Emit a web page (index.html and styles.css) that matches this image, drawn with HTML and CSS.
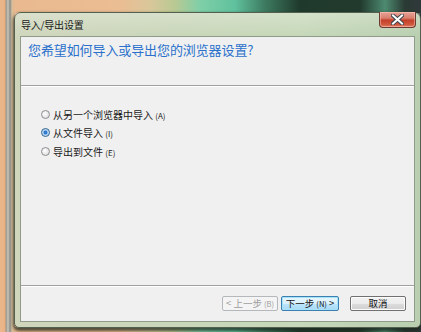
FILE: index.html
```html
<!DOCTYPE html>
<html lang="zh-CN">
<head>
<meta charset="utf-8">
<title>导入/导出设置</title>
<link rel="stylesheet" href="styles.css">
</head>
<body>
<div class="desktop">
  <div class="strip-left"></div>
  <div class="window">
    <div class="titlebar">
      <span class="title">导入/导出设置</span>
      <button class="close" aria-label="关闭">
        <svg width="13" height="11" viewBox="0 0 13 11">
          <path d="M2 1.5 L11 9.5 M11 1.5 L2 9.5" stroke="#3d4650" stroke-width="4" stroke-linecap="square"/>
          <path d="M2 1.5 L11 9.5 M11 1.5 L2 9.5" stroke="#ffffff" stroke-width="2" stroke-linecap="square"/>
        </svg>
      </button>
    </div>
    <div class="client">
      <div class="header">
        <h1 class="question">您希望如何导入或导出您的浏览器设置?</h1>
      </div>
      <div class="body">
        <label class="option"><span class="radio"></span><span class="label">从另一个浏览器中导入 <span class="key">(A)</span></span></label>
        <label class="option"><span class="radio checked"></span><span class="label">从文件导入 <span class="key">(I)</span></span></label>
        <label class="option"><span class="radio"></span><span class="label">导出到文件 <span class="key">(E)</span></span></label>
      </div>
      <div class="footer">
        <button class="btn disabled">&lt; 上一步 <span class="key">(B)</span></button>
        <button class="btn default">下一步 <span class="key">(N)</span> &gt;</button>
        <button class="btn cancel">取消</button>
      </div>
    </div>
  </div>
</div>
</body>
</html>
```

FILE: styles.css
```css
html, body {
  margin: 0;
  padding: 0;
  width: 421px;
  height: 332px;
  overflow: hidden;
}

.desktop {
  position: relative;
  width: 421px;
  height: 332px;
  overflow: hidden;
  display: flex;
  align-items: flex-start;
  background:
    linear-gradient(to right,
      #e9b88e 0px, #ebbd93 120px, #d9c79a 150px, #b9c993 175px,
      #7fcfa8 200px, #5fc19d 235px, #3d7a60 265px, #1f3a2c 300px,
      #223a2e 360px, #4d8a70 385px, #2a3a34 405px, #30383a 421px);
  font-family: "Noto Sans CJK SC", "Noto Sans", sans-serif;
}

.strip-left {
  position: absolute;
  left: 0;
  top: 0;
  width: 14px;
  height: 332px;
  background: linear-gradient(to right, #eab78c 0px, #e8b184 5px, #9a9488 6px, #c9c7bd 8px, #8a8b85 10px, #d8c1a0 12px, #e2b68e 14px);
}

.window {
  position: relative;
  margin: 12px 0 0 14px;
  width: 408px;
  height: 316px;
  box-sizing: border-box;
  border: 1px solid #53604f;
  border-radius: 7px 7px 5px 5px;
  padding: 0 5px 5px 5px;
  display: flex;
  flex-direction: column;
  background:
    linear-gradient(to right, #cfd6bc 0%, #c9d6b9 40%, #c6d8b9 70%, #b9cfb0 100%);
  box-shadow: 0 2px 3px 1px rgba(30, 40, 30, 0.75);
}

.titlebar {
  height: 23px;
  display: flex;
  align-items: flex-start;
  justify-content: space-between;
  background: linear-gradient(to bottom, rgba(255,255,255,0.25), rgba(255,255,255,0));
  margin: 0 -5px;
  padding: 0 4px 0 6px;
}

.title {
  font-size: 10px;
  line-height: 12px;
  margin-top: 6px;
  color: #1a1a1a;
  letter-spacing: -0.2px;
}

.close {
  width: 37px;
  height: 16px;
  margin-top: -1px;
  border: 1px solid #6c3b33;
  border-top: none;
  border-radius: 0 0 4px 4px;
  padding: 0;
  display: flex;
  align-items: center;
  justify-content: center;
  background: linear-gradient(to bottom, #e8a296 0%, #d9806f 40%, #c4402a 55%, #cf5a3e 85%, #e3866a 100%);
  box-shadow: inset 0 0 0 1px rgba(255, 200, 190, 0.5);
}

.client {
  flex: 1;
  display: flex;
  flex-direction: column;
  background: #f0f0f0;
  border: 1px solid #8f9c8c;
}

.header {
  height: 49px;
  border-bottom: 1px solid #a0a0a0;
  box-shadow: 0 1px 0 #ffffff;
  padding: 4px 0 0 7px;
  box-sizing: border-box;
}

.question {
  margin: 0;
  font-weight: normal;
  font-size: 13px;
  line-height: 17px;
  color: #2a70cc;
  letter-spacing: -0.1px;
}

.body {
  flex: 1;
  padding: 19px 0 0 20px;
  display: flex;
  flex-direction: column;
  border-bottom: 1px solid #a0a0a0;
  box-shadow: 0 1px 0 #ffffff;
}

.option {
  height: 18.5px;
  display: flex;
  align-items: center;
  gap: 3px;
  font-size: 10px;
  color: #1a1a1a;
}

.key {
  font-size: 8px;
}

.radio {
  width: 9px;
  height: 9px;
  box-sizing: border-box;
  border-radius: 50%;
  border: 1px solid #8b8e91;
  background: radial-gradient(circle at 40% 40%, #ffffff 0%, #e6e6e6 60%, #cfd1d3 100%);
}

.radio.checked {
  border-color: #2c628b;
  background: radial-gradient(circle, #3c8ae0 0%, #2a6fc8 30%, #9cc6ec 45%, #e6f1fb 80%);
}

.footer {
  height: 35px;
  display: flex;
  align-items: center;
  justify-content: flex-end;
  padding: 0 8px 0 0;
  box-sizing: border-box;
}

.btn {
  height: 15px;
  box-sizing: border-box;
  padding: 0;
  font-family: "Noto Sans CJK SC", "Noto Sans", sans-serif;
  font-size: 9.5px;
  line-height: 13px;
  color: #111;
  border-radius: 2px;
  display: flex;
  align-items: center;
  justify-content: center;
  white-space: pre;
}

.btn .key {
  font-size: 7.5px;
}

.btn.disabled {
  width: 56px;
  border: 1px solid #b5b8bb;
  background: #f4f4f4;
  color: #9d9d9d;
}

.btn.default {
  width: 58px;
  margin-left: 3px;
  border: 1px solid #3c7fb1;
  background: linear-gradient(to bottom, #eaf6fd 0%, #d9f0fc 50%, #bee6fd 51%, #a7d9f5 100%);
  box-shadow: inset 0 0 0 1px #a4e3fb;
}

.btn.cancel {
  width: 56px;
  margin-left: 11px;
  border: 1px solid #707070;
  background: linear-gradient(to bottom, #f2f2f2 0%, #ebebeb 50%, #dddddd 51%, #cfcfcf 100%);
  box-shadow: inset 0 0 0 1px #fcfcfc;
}
```
